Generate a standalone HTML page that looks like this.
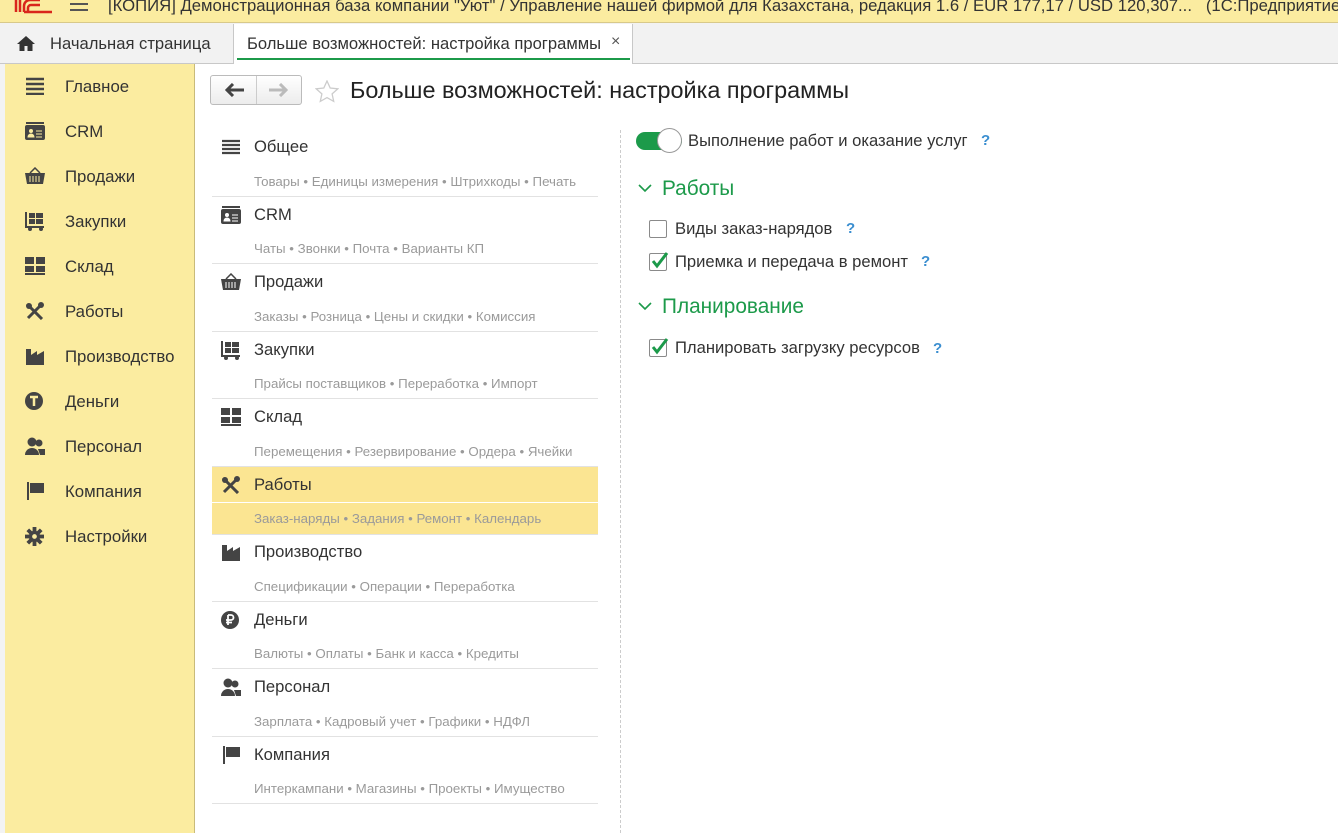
<!DOCTYPE html>
<html><head><meta charset="utf-8"><style>
*{margin:0;padding:0;box-sizing:border-box}
body{width:1338px;height:833px;overflow:hidden;background:#fff;font-family:"Liberation Sans",Arial,sans-serif;position:relative;color:#333}
.a{position:absolute;white-space:nowrap}
#top{left:0;top:0;width:1338px;height:23px;background:#fbeca0;border-bottom:1px solid #d8c98a}
#tabs{left:0;top:23px;width:1338px;height:41px;background:#f2f2f2;border-bottom:1px solid #c8c8c8}
#side{left:5px;top:64px;width:190px;height:769px;background:#fbeca0;border-right:1px solid #c9bb7a}
.si{position:absolute;left:60px;font-size:16.8px;color:#333}
.st{position:absolute;left:254px;font-size:16.6px;color:#333}
.ss{position:absolute;left:254px;font-size:13.3px;color:#9a9a9a}
.sep{position:absolute;left:212px;width:386px;height:1px;background:#e2e2e2}
.hl{position:absolute;left:212px;width:386px;background:#fbe592}
.chk{position:absolute;width:18px;height:18px;border:1px solid #8a8a8a;border-radius:2px;background:#fff}
.q{position:absolute;color:#3a8ed0;font-weight:bold;font-size:15px}
</style></head><body>
<div id="top" class="a"></div>
<svg class="a" style="left:14px;top:0" width="40" height="14"><path d="M2 0v12M6 0v12M10 12V6a6 6 0 0 1 6-6h10M14 12V8a3 3 0 0 1 3-3h9M10 12h28" stroke="#d9261c" stroke-width="2.5" fill="none"/></svg>
<div class="a" style="left:70px;top:3px;width:18px;height:2px;background:#555"></div>
<div class="a" style="left:70px;top:9px;width:18px;height:2px;background:#555"></div>
<div class="a" style="left:108px;top:-4px;font-size:16.7px;color:#333">[КОПИЯ] Демонстрационная база компании "Уют" / Управление нашей фирмой для Казахстана, редакция 1.6 / EUR 177,17 / USD 120,307...&nbsp;&nbsp;&nbsp;(1С:Предприятие)</div>
<div id="tabs" class="a"></div>
<svg class="a" style="left:17px;top:36px" width="18" height="15"><path d="M9 0L0 8h2.5v7h5v-5h3v5h5V8H18z" fill="#333"/></svg>
<div class="a" style="left:50px;top:34px;font-size:16.6px;color:#333">Начальная страница</div>
<div class="a" style="left:233px;top:24px;width:400px;height:40px;background:#fff;border-left:1px solid #c8c8c8;border-right:1px solid #c8c8c8"></div>
<div class="a" style="left:247px;top:34px;font-size:16.6px;color:#333">Больше возможностей: настройка программы</div>
<div class="a" style="left:611px;top:33px;font-size:16px;color:#555">×</div>
<div class="a" style="left:237px;top:58px;width:393px;height:2px;background:#1c9a4a"></div>
<div class="a" style="left:0;top:64px;width:5px;height:769px;background:#f3f3f3"></div>
<div id="side" class="a"></div>
<svg class="a" style="left:26px;top:77px" width="18" height="18"><path d="M0 2h18M0 7h18M0 12h18M0 17h18" stroke="#444" stroke-width="2.4"/></svg>
<svg class="a" style="left:25px;top:122px" width="20" height="18"><rect x="0" y="3" width="20" height="15" rx="2" fill="#444"/><rect x="1" y="0" width="18" height="2" fill="#444"/><circle cx="6" cy="9" r="2" fill="#fbeca0"/><path d="M3 15a3 3 0 0 1 6 0z M11 9h6M11 12h6M11 15h6" fill="#fbeca0" stroke="#fbeca0"/></svg>
<svg class="a" style="left:25px;top:167px" width="20" height="18"><path d="M0 6h20l-2 11H2z" fill="#444"/><path d="M5 6l5-5 5 5" stroke="#444" fill="none" stroke-width="1.5"/><path d="M5 9v6M8 9v6M11 9v6M14 9v6" stroke="#fbeca0"/></svg>
<svg class="a" style="left:25px;top:212px" width="20" height="19"><path d="M1 0v15h18" stroke="#444" stroke-width="2" fill="none"/><rect x="4" y="1" width="6" height="5" fill="#444"/><rect x="11" y="1" width="7" height="5" fill="#444"/><rect x="4" y="7" width="6" height="5" fill="#444"/><rect x="11" y="7" width="7" height="5" fill="#444"/><circle cx="5" cy="17" r="2" fill="#444"/><circle cx="16" cy="17" r="2" fill="#444"/></svg>
<svg class="a" style="left:25px;top:257px" width="20" height="18"><rect x="0" y="0" width="9" height="7" fill="#444"/><rect x="11" y="0" width="9" height="7" fill="#444"/><rect x="0" y="9" width="9" height="6" fill="#444"/><rect x="11" y="9" width="9" height="6" fill="#444"/><rect x="0" y="16" width="20" height="2" fill="#444"/></svg>
<svg class="a" style="left:25px;top:302px" width="20" height="18"><path d="M2 2l15 15M17 2L3 16" stroke="#444" stroke-width="3"/><circle cx="4" cy="4" r="3" fill="#444"/><circle cx="16" cy="3" r="3" fill="#444"/></svg>
<svg class="a" style="left:26px;top:347px" width="18" height="18"><path d="M0 18V2h5v6l6-4v4l7-4v14z" fill="#444"/></svg>
<svg class="a" style="left:25px;top:392px" width="18" height="18"><circle cx="9" cy="9" r="9" fill="#444"/><path d="M5 5h8M9 5v9" stroke="#fbeca0" stroke-width="2.5"/></svg>
<svg class="a" style="left:25px;top:437px" width="20" height="18"><circle cx="7" cy="5" r="4.5" fill="#444"/><path d="M0 18a7 7 0 0 1 14 0z" fill="#444"/><circle cx="14" cy="6" r="3.5" fill="#444"/><path d="M13 12h7v6h-5z" fill="#444"/></svg>
<svg class="a" style="left:27px;top:482px" width="18" height="18"><path d="M1 0v18" stroke="#444" stroke-width="2"/><path d="M3 1h14v10H3z" fill="#444"/></svg>
<svg class="a" style="left:25px;top:527px" width="19" height="19" viewBox="-10 -10 20 20"><g fill="#444"><circle r="6"/><g id="t"><rect x="-2" y="-10" width="4" height="5"/></g><use href="#t" transform="rotate(45)"/><use href="#t" transform="rotate(90)"/><use href="#t" transform="rotate(135)"/><use href="#t" transform="rotate(180)"/><use href="#t" transform="rotate(225)"/><use href="#t" transform="rotate(270)"/><use href="#t" transform="rotate(315)"/></g><circle r="2.5" fill="#fbeca0"/></svg>
<div class="si" style="left:65px;top:77px">Главное</div>
<div class="si" style="left:65px;top:122px">CRM</div>
<div class="si" style="left:65px;top:167px">Продажи</div>
<div class="si" style="left:65px;top:212px">Закупки</div>
<div class="si" style="left:65px;top:257px">Склад</div>
<div class="si" style="left:65px;top:302px">Работы</div>
<div class="si" style="left:65px;top:347px">Производство</div>
<div class="si" style="left:65px;top:392px">Деньги</div>
<div class="si" style="left:65px;top:437px">Персонал</div>
<div class="si" style="left:65px;top:482px">Компания</div>
<div class="si" style="left:65px;top:527px">Настройки</div>
<div class="a" style="left:210px;top:75px;width:92px;height:30px;border:1px solid #bbb;border-radius:3px;background:linear-gradient(#fff,#ececec)"></div>
<div class="a" style="left:256px;top:76px;width:1px;height:28px;background:#ccc"></div>
<svg class="a" style="left:224px;top:83px" width="20" height="14"><path d="M20 7H4M9 1L3 7l6 6" stroke="#444" stroke-width="3" fill="none"/></svg>
<svg class="a" style="left:269px;top:83px" width="20" height="14"><path d="M0 7h16M11 1l6 6-6 6" stroke="#bbb" stroke-width="3" fill="none"/></svg>
<svg class="a" style="left:315px;top:80px" width="24" height="23"><path d="M12 1l3.2 7 7.6.8-5.7 5.1 1.6 7.5L12 17.6 5.3 21.4l1.6-7.5L1.2 8.8 8.8 8z" fill="none" stroke="#ccc" stroke-width="1.3"/></svg>
<div class="a" style="left:350px;top:77px;font-size:23.4px;color:#222">Больше возможностей: настройка программы</div>
<div class="hl" style="top:467px;height:35px"></div>
<div class="hl" style="top:503px;height:31px"></div>
<div class="sep" style="top:196px"></div><div class="sep" style="top:263px"></div><div class="sep" style="top:331px"></div><div class="sep" style="top:398px"></div><div class="sep" style="top:466px"></div><div class="sep" style="top:534px"></div><div class="sep" style="top:601px"></div><div class="sep" style="top:668px"></div><div class="sep" style="top:736px"></div><div class="sep" style="top:803px"></div>
<svg class="a" style="left:222px;top:139px" width="18" height="16"><path d="M0 2h18M0 6h18M0 10h18M0 14h18" stroke="#444" stroke-width="2.2"/></svg>
<svg class="a" style="left:221px;top:206px" width="20" height="18"><rect x="0" y="3" width="20" height="15" rx="2" fill="#444"/><rect x="1" y="0" width="18" height="2" fill="#444"/><circle cx="6" cy="9" r="2" fill="#fff"/><path d="M3 15a3 3 0 0 1 6 0z M11 9h6M11 12h6M11 15h6" fill="#fff" stroke="#fff"/></svg>
<svg class="a" style="left:221px;top:273px" width="20" height="18"><path d="M0 6h20l-2 11H2z" fill="#444"/><path d="M5 6l5-5 5 5" stroke="#444" fill="none" stroke-width="1.5"/><path d="M5 9v6M8 9v6M11 9v6M14 9v6" stroke="#fff"/></svg>
<svg class="a" style="left:221px;top:341px" width="20" height="19"><path d="M1 0v15h18" stroke="#444" stroke-width="2" fill="none"/><rect x="4" y="1" width="6" height="5" fill="#444"/><rect x="11" y="1" width="7" height="5" fill="#444"/><rect x="4" y="7" width="6" height="5" fill="#444"/><rect x="11" y="7" width="7" height="5" fill="#444"/><circle cx="5" cy="17" r="2" fill="#444"/><circle cx="16" cy="17" r="2" fill="#444"/></svg>
<svg class="a" style="left:221px;top:408px" width="20" height="18"><rect x="0" y="0" width="9" height="7" fill="#444"/><rect x="11" y="0" width="9" height="7" fill="#444"/><rect x="0" y="9" width="9" height="6" fill="#444"/><rect x="11" y="9" width="9" height="6" fill="#444"/><rect x="0" y="16" width="20" height="2" fill="#444"/></svg>
<svg class="a" style="left:221px;top:476px" width="20" height="18"><path d="M2 2l15 15M17 2L3 16" stroke="#444" stroke-width="3"/><circle cx="4" cy="4" r="3" fill="#444"/><circle cx="16" cy="3" r="3" fill="#444"/></svg>
<svg class="a" style="left:222px;top:543px" width="18" height="18"><path d="M0 18V2h5v6l6-4v4l7-4v14z" fill="#444"/></svg>
<svg class="a" style="left:221px;top:611px" width="18" height="18"><circle cx="9" cy="9" r="9" fill="#444"/><path d="M7 4v10M7 4h3a2.5 2.5 0 0 1 0 5H5M5 11.5h6" stroke="#fff" stroke-width="1.8" fill="none"/></svg>
<svg class="a" style="left:221px;top:678px" width="20" height="18"><circle cx="7" cy="5" r="4.5" fill="#444"/><path d="M0 18a7 7 0 0 1 14 0z" fill="#444"/><circle cx="14" cy="6" r="3.5" fill="#444"/><path d="M13 12h7v6h-5z" fill="#444"/></svg>
<svg class="a" style="left:223px;top:746px" width="18" height="18"><path d="M1 0v18" stroke="#444" stroke-width="2"/><path d="M3 1h14v10H3z" fill="#444"/></svg>
<div class="st" style="top:137px">Общее</div><div class="ss" style="top:174px">Товары • Единицы измерения • Штрихкоды • Печать</div>
<div class="st" style="top:205px">CRM</div><div class="ss" style="top:241px">Чаты • Звонки • Почта • Варианты КП</div>
<div class="st" style="top:272px">Продажи</div><div class="ss" style="top:309px">Заказы • Розница • Цены и скидки • Комиссия</div>
<div class="st" style="top:340px">Закупки</div><div class="ss" style="top:376px">Прайсы поставщиков • Переработка • Импорт</div>
<div class="st" style="top:407px">Склад</div><div class="ss" style="top:444px">Перемещения • Резервирование • Ордера • Ячейки</div>
<div class="st" style="top:475px">Работы</div><div class="ss" style="top:511px">Заказ-наряды • Задания • Ремонт • Календарь</div>
<div class="st" style="top:542px">Производство</div><div class="ss" style="top:579px">Спецификации • Операции • Переработка</div>
<div class="st" style="top:610px">Деньги</div><div class="ss" style="top:646px">Валюты • Оплаты • Банк и касса • Кредиты</div>
<div class="st" style="top:677px">Персонал</div><div class="ss" style="top:714px">Зарплата • Кадровый учет • Графики • НДФЛ</div>
<div class="st" style="top:745px">Компания</div><div class="ss" style="top:781px">Интеркампани • Магазины • Проекты • Имущество</div>
<div class="a" style="left:620px;top:130px;width:0;height:703px;border-left:1px dashed #ccc"></div>
<div class="a" style="left:636px;top:132px;width:46px;height:18px;border-radius:9px;background:#1c9a4a"></div>
<div class="a" style="left:657px;top:128px;width:25px;height:25px;border-radius:50%;background:#fff;border:1px solid #999"></div>
<div class="a" style="left:688px;top:131px;font-size:16.6px;color:#333">Выполнение работ и оказание услуг</div>
<div class="q" style="left:981px;top:132px">?</div>
<svg class="a" style="left:638px;top:184px" width="14" height="9"><path d="M1 1l6 6 6-6" stroke="#1c9a4a" stroke-width="1.6" fill="none"/></svg>
<div class="a" style="left:662px;top:177px;font-size:20.8px;color:#1c9a4a">Работы</div>
<div class="chk" style="left:649px;top:220px"></div>
<div class="a" style="left:675px;top:219px;font-size:16.6px;color:#333">Виды заказ-нарядов</div>
<div class="q" style="left:846px;top:220px">?</div>
<div class="chk" style="left:649px;top:253px"></div>
<svg class="a" style="left:650px;top:250px" width="20" height="20"><path d="M3 11l4 5 10-13" stroke="#1c9a4a" stroke-width="3" fill="none"/></svg>
<div class="a" style="left:675px;top:252px;font-size:16.6px;color:#333">Приемка и передача в ремонт</div>
<div class="q" style="left:921px;top:253px">?</div>
<svg class="a" style="left:638px;top:302px" width="14" height="9"><path d="M1 1l6 6 6-6" stroke="#1c9a4a" stroke-width="1.6" fill="none"/></svg>
<div class="a" style="left:662px;top:295px;font-size:20.8px;color:#1c9a4a">Планирование</div>
<div class="chk" style="left:649px;top:339px"></div>
<svg class="a" style="left:650px;top:336px" width="20" height="20"><path d="M3 11l4 5 10-13" stroke="#1c9a4a" stroke-width="3" fill="none"/></svg>
<div class="a" style="left:675px;top:338px;font-size:16.6px;color:#333">Планировать загрузку ресурсов</div>
<div class="q" style="left:933px;top:340px">?</div>
</body></html>
